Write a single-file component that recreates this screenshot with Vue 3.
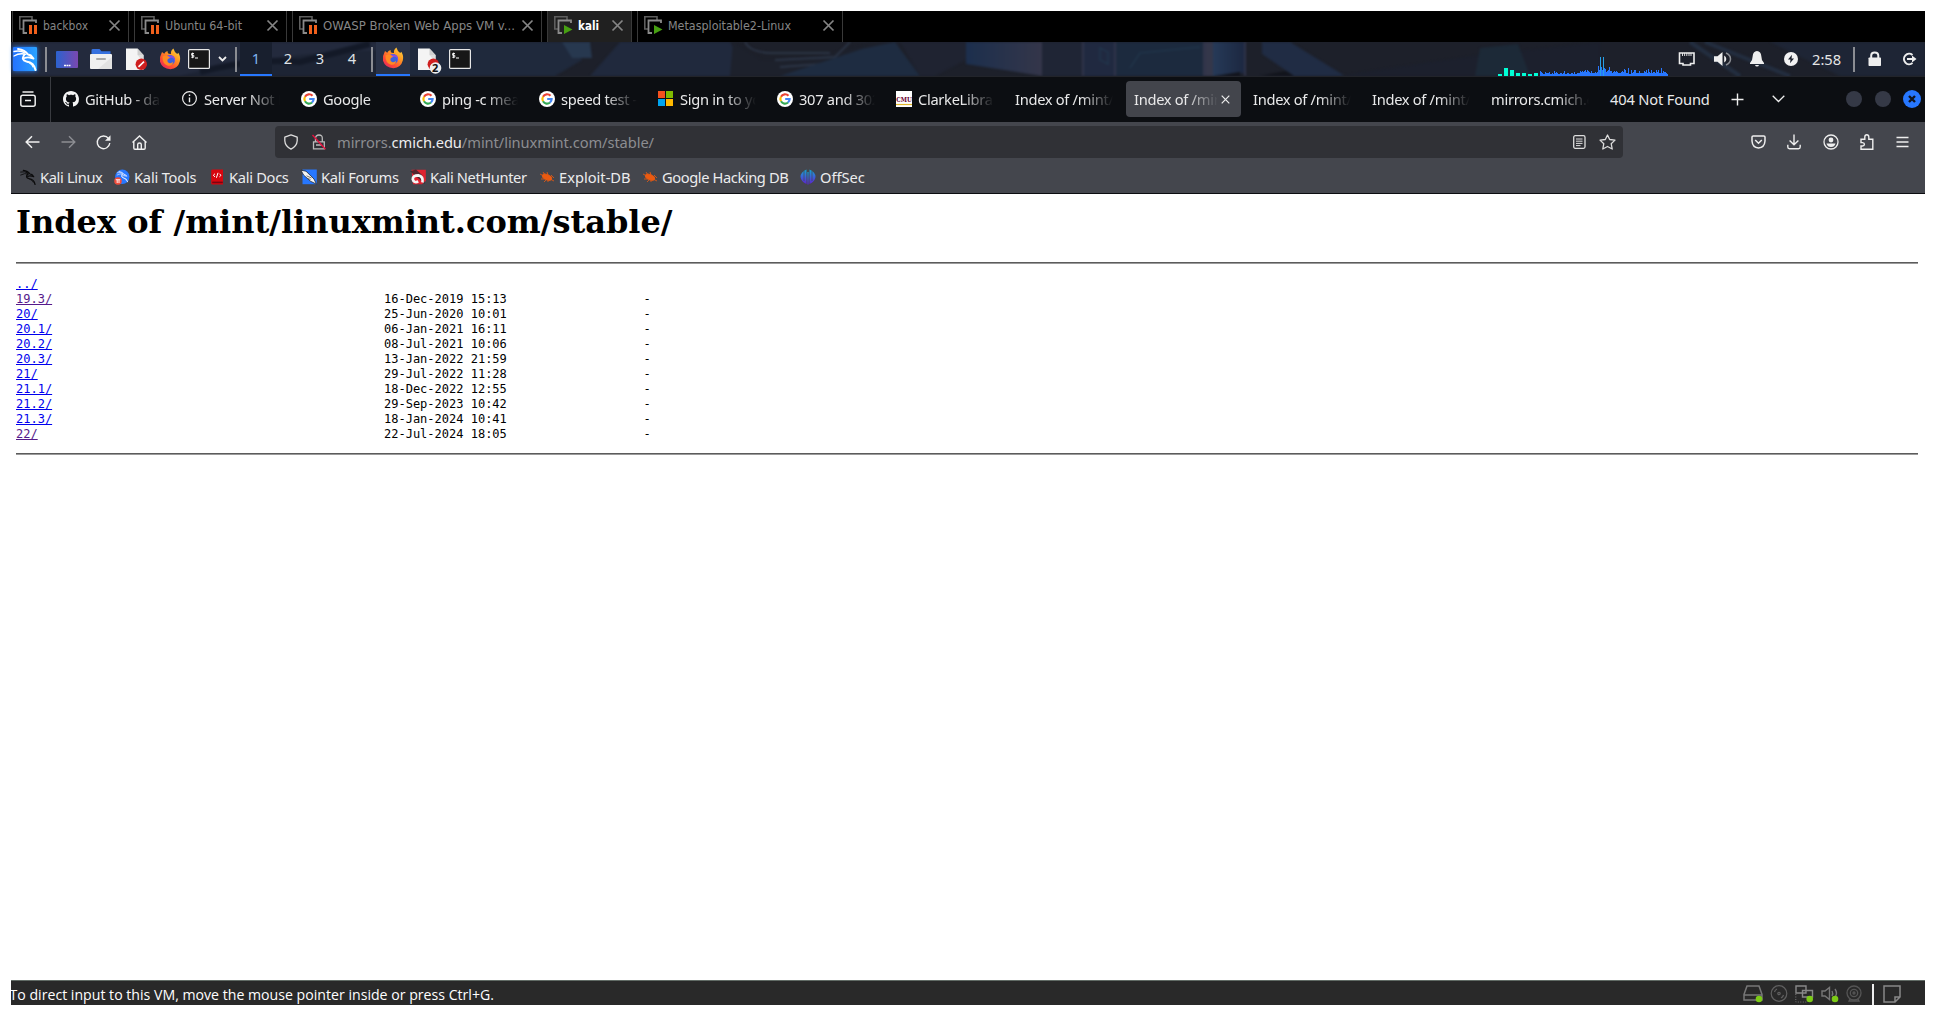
<script setup>
const vmTabs = [
  { name: 'backbox', state: 'paused', w: 117, t: 45 },
  { name: 'Ubuntu 64-bit', state: 'paused', w: 153, t: 77 },
  { name: 'OWASP Broken Web Apps VM v...', state: 'paused', w: 250, t: 192 },
  { name: 'kali', state: 'running', w: 85, t: 21, active: true },
  { name: 'Metasploitable2-Linux', state: 'running', w: 206, t: 123 },
]
const tabs = [
  { icon: 'github', text: 'GitHub - da' },
  { icon: 'info', text: 'Server Not F' },
  { icon: 'google', text: 'Google' },
  { icon: 'google', text: 'ping -c mea' },
  { icon: 'google', text: 'speed test -' },
  { icon: 'ms', text: 'Sign in to yo' },
  { icon: 'google', text: '307 and 302' },
  { icon: 'cmu', text: 'ClarkeLibrar' },
  { text: 'Index of /mint/l' },
  { text: 'Index of /min', active: true },
  { text: 'Index of /mint/l' },
  { text: 'Index of /mint/l' },
  { text: 'mirrors.cmich.e' },
  { text: '404 Not Found', full: true },
]
const bookmarks = [
  { icon: 'dragon', text: 'Kali Linux', w: 94, ls: -0.35 },
  { icon: 'tools', text: 'Kali Tools', w: 95, ls: -0.2 },
  { icon: 'docs', text: 'Kali Docs', w: 92, ls: -0.3 },
  { icon: 'forums', text: 'Kali Forums', w: 109, ls: -0.3 },
  { icon: 'hunter', text: 'Kali NetHunter', w: 129, ls: -0.38 },
  { icon: 'bug', text: 'Exploit-DB', w: 103, ls: 0 },
  { icon: 'bug', text: 'Google Hacking DB', w: 158, ls: -0.4 },
  { icon: 'offsec', text: 'OffSec', w: 70, ls: 0 },
]
const files = [
  ['19.3/', '16-Dec-2019 15:13', true],
  ['20/', '25-Jun-2020 10:01'],
  ['20.1/', '06-Jan-2021 16:11'],
  ['20.2/', '08-Jul-2021 10:06'],
  ['20.3/', '13-Jan-2022 21:59'],
  ['21/', '29-Jul-2022 11:28'],
  ['21.1/', '18-Dec-2022 12:55'],
  ['21.2/', '29-Sep-2023 10:42'],
  ['21.3/', '18-Jan-2024 10:41'],
  ['22/', '22-Jul-2024 18:05', true],
]
const netBars = [2, 8, 6, 3, 3, 2, 3]
const cpu = '5432243334223253432233235223322332422333545456465435333434a6j96j87456955345454333454763382263466333533335463743634436463383544322346533324332243322432234'
  .split('').slice(0, 128).map(c => parseInt(c, 36))
</script>

<template>
  <svg class="defs" width="0" height="0" aria-hidden="true">
    <defs>
      <linearGradient id="gDesk" x1="0" x2="1"><stop offset="0" stop-color="#2b62cf" /><stop offset="1" stop-color="#7a48b0" /></linearGradient>
      <linearGradient id="gKali" x1="0" x2="1"><stop offset="0" stop-color="#2473ff" /><stop offset="1" stop-color="#2aa2ff" /></linearGradient>
      <linearGradient id="gFox" x1="1" y1="0" x2=".2" y2="1"><stop offset="0" stop-color="#ffe14a" /><stop offset=".4" stop-color="#ff9a22" /><stop offset=".75" stop-color="#ff4b34" /><stop offset="1" stop-color="#e32860" /></linearGradient>
      <linearGradient id="gOff" x1="0" y1="0" x2="0" y2="1"><stop offset="0" stop-color="#12a7cf" /><stop offset=".5" stop-color="#3b63d8" /><stop offset="1" stop-color="#5a24cc" /></linearGradient>
      <linearGradient id="gA" x1="0" x2="1"><stop offset="0" stop-color="#1c2f4d" /><stop offset="1" stop-color="#34364a" /></linearGradient>
      <linearGradient id="gB" x1="0" x2="1"><stop offset="0" stop-color="#263a58" /><stop offset="1" stop-color="#1c2740" /></linearGradient>
      <filter id="soft" x="-2%" y="-20%" width="104%" height="140%" color-interpolation-filters="sRGB"><feGaussianBlur stdDeviation="1.2" /></filter>
    </defs>
    <symbol id="dragonShape" viewBox="0 0 24 24">
      <g fill="none" stroke="currentColor" stroke-linecap="round" stroke-linejoin="round">
        <path d="M1 4.5Q7 3 12 6" stroke-width="1.4" /><path d="M1 9Q7 5.5 13 7.5" stroke-width="1.3" />
        <path d="M5 2Q12 3 15 7.5L18 8.5L20.5 11.5L17 10.5Q13.5 10 11.5 11" stroke-width="1.9" />
        <path d="M11.5 7.5Q7.5 13 13.5 14.5Q21 15.5 22.5 23" stroke-width="2" />
        <path d="M14 14.8Q19 17 20 20" stroke-width="1.1" />
      </g>
    </symbol>
    <symbol id="foxShape" viewBox="0 0 22 22">
      <path d="M3 4L5.2 5.8Q6.2 3.8 8.5 3Q8.3 4.7 9.6 5.8L12 6Q11.4 2.8 14.4.5Q15.2 3.8 18.2 6L19.3 4.8Q22 9 20.8 13.5Q19 20.5 11.4 21.3Q3.2 20.8 1 13.8Q.2 9 3 4Z" fill="url(#gFox)" />
      <circle cx="11" cy="12" r="5" fill="#3b62dd" /><path d="M7 9Q10 6.3 14.7 8.5Q17 11.8 15.3 15Q16.2 9.8 12 9.7Q9.5 11.5 7 9Z" fill="#8a4ce0" />
      <path d="M3.5 8.5Q7 6 10.8 9.2Q11.4 10 8.9 10.9Q7.5 13.5 10 15Q12.3 15.8 14.2 13.8Q13.4 18.2 9 17.7Q3.2 16 3.5 8.5Z" fill="#ff8a22" />
    </symbol>
    <symbol id="docShape" viewBox="0 0 22 22">
      <path d="M0 .5H11.5L17.5 7V22H0Z" fill="#f4f4f4" /><path d="M11.5.5L17.5 7H11.5Z" fill="#cfcfcf" /><path d="M11.5 7H17.5V14Z" fill="#dedede" />
      <circle cx="15.3" cy="16.2" r="5.7" fill="#cf1f1f" />
    </symbol>
    <symbol id="termShape" viewBox="0 0 22 20"><rect x=".6" y=".6" width="20.8" height="18.8" rx="1" fill="#171717" stroke="#e7e7e7" stroke-width="1.2" /><path d="M6 4.5H3.6V6.3H5.8V8.2H3.2M4.6 3.6V9.2" fill="none" stroke="#fff" stroke-width=".9" /><path d="M7 9H10" stroke="#fff" stroke-width="1" /></symbol>
    <symbol id="googleShape" viewBox="0 0 16 16">
      <circle cx="8" cy="8" r="8" fill="#fff" />
      <g fill="none" stroke-width="2.2"><path d="M11.5 4.8A4.6 4.6 0 0 0 4 5.7" stroke="#ea4335" /><path d="M4 5.7A4.6 4.6 0 0 0 4 10.3" stroke="#fbbc05" /><path d="M4 10.3A4.6 4.6 0 0 0 11 11.5" stroke="#34a853" /><path d="M11 11.5Q12.6 10 12.6 8H8.2" stroke="#4285f4" /></g>
    </symbol>
  </svg>

  <main class="screen">
    <header class="vm-bar">
      <div v-for="t in vmTabs" :key="t.name" class="vm-tab" :class="{ active: t.active }" :style="{ width: t.w + 'px' }">
        <svg class="vm-ico" width="18" height="18" viewBox="0 0 18 18">
          <path d="M4 13H.8V.8H13V4" fill="none" stroke="#5f5f5f" stroke-width="1.6" /><path d="M8 17H4.5V4.5H17V7" fill="none" stroke="#8a8a8a" stroke-width="1.8" />
          <path v-if="t.state === 'paused'" d="M10 9H13V18H10ZM15 9H18V18H15Z" fill="#f0601c" />
          <path v-else d="M10 9L18.5 13.5L10 18Z" fill="#47a012" />
        </svg>
        <svg class="vm-name" height="20" :width="t.t"><text x="0" y="14.5" :textLength="t.t" lengthAdjust="spacingAndGlyphs">{{ t.name }}</text></svg>
        <svg class="vm-x" width="11" height="11" viewBox="0 0 11 11"><path d="M.5.5L10.5 10.5M10.5.5L.5 10.5" stroke="#858585" stroke-width="1.7" /></svg>
      </div>
    </header>

    <section class="panel">
      <svg class="wall" width="1914" height="34" viewBox="11 42 1914 34">
        <g filter="url(#soft)">
          <path d="M11 42H480V76H11Z" fill="#232a3d" /><path d="M180 76Q270 52 390 50L480 42V76Z" fill="#1d2434" /><path d="M200 72Q250 58 300 62L370 44" stroke="#131927" stroke-width="6" fill="none" />
          <path d="M400 42H570L582 60L555 76H400Z" fill="#1f293c" /><path d="M562 42L572 58H592L590 42Z" fill="#27384f" />
          <path d="M590 76L620 42H730L750 76Z" fill="#20293d" /><path d="M733 42L762 60H800L880 42H900V76H730Z" fill="#1d212c" />
          <path d="M745 42Q750 52 770 53H830M775 60L835 57L850 42M780 67L850 62" fill="none" stroke="#303b4e" stroke-width="1.4" />
          <path d="M780 76L862 49L895 42L920 76Z" fill="#1e2c41" /><path d="M900 42H966V60L935 76H920Z" fill="#1f2331" /><path d="M966 42H1042V76L966 64Z" fill="url(#gA)" />
          <path d="M1042 42H1083V76H1042Z" fill="#1f2535" /><path d="M1083 42H1115V76H1083Z" fill="#202940" /><path d="M1115 42H1203V76H1115Z" fill="#1c2a3e" />
          <path d="M1130 68L1140 53L1200 47M1100 48V60L1108 64V52Z" fill="none" stroke="#22394f" stroke-width="1.2" /><path d="M1203 42H1213V76H1203Z" fill="#34374a" /><path d="M1213 42H1245V73L1213 76Z" fill="url(#gB)" />
          <path d="M1083 42V76M1115 42V76M1205 42V76M1245 42V76" stroke="#30344a" stroke-width="2" /><path d="M1215 76L1240 72V76ZM1260 76L1285 71L1300 76Z" fill="#12141c" />
          <path d="M1262 42H1290L1345 76H1294L1262 54Z" fill="#202c44" /><path d="M1340 76Q1400 66 1480 55L1600 42V76Z" fill="#1c202d" />
          <path d="M1475 76L1480 48L1518 44L1530 76Z" fill="#1c2937" /><path d="M1690 42L1740 76M1705 42L1790 76" stroke="#232e40" stroke-width="4" /><path d="M1770 42H1925V76H1840Z" fill="#1e2535" />
        </g>
      </svg>
      <svg class="kali" width="24" height="24" viewBox="0 0 24 24"><rect width="24" height="24" rx="1" fill="url(#gKali)" /><use href="#dragonShape" width="24" height="24" color="#fff" /></svg>
      <i class="sep s1"></i>
      <svg class="p-desk" width="22" height="17" viewBox="0 0 22 17"><rect width="22" height="17" rx="1" fill="url(#gDesk)" /><path d="M8 14.5H10M10.5 14.5H12.5M13 14.5H14.5" stroke="#fff" stroke-width="1.6" /></svg>
      <svg class="p-folder" width="22" height="20" viewBox="0 0 22 20"><path d="M1.5 8V1.2Q1.5 0 3 0H9.5L11.5 2.3H20.5V8Z" fill="#3671df" /><rect y="5" width="22" height="15" rx="1" fill="#f0f0f0" /><path d="M22 8V20H8Z" fill="#e2e2e2" /><rect x="6" y="9" width="10" height="2" rx="1" fill="#aaa" /></svg>
      <svg class="p-doc" width="22" height="22" viewBox="0 0 22 22"><use href="#docShape" width="22" height="22" /><path d="M12.5 18.8L18 13.7" stroke="#fff" stroke-width="1.6" /></svg>
      <svg class="p-fox" width="22" height="22"><use href="#foxShape" width="22" height="22" /></svg>
      <svg class="p-term" width="22" height="20"><use href="#termShape" width="22" height="20" /></svg>
      <svg class="p-chev" width="9" height="6" viewBox="0 0 9 6"><path d="M1 1L4.5 4.4L8 1" fill="none" stroke="#eee" stroke-width="1.8" /></svg>
      <i class="sep s2"></i>
      <nav class="spaces"><span class="on">1</span><span>2</span><span>3</span><span>4</span></nav>
      <i class="sep s3"></i>
      <div class="task on"><svg width="22" height="22"><use href="#foxShape" width="22" height="22" /></svg></div>
      <div class="task doc"><svg width="24" height="26" viewBox="0 0 24 26"><use href="#docShape" width="22" height="22" /><circle cx="17.5" cy="20" r="5.8" fill="#eee" /><text x="14" y="24.3" class="badge">2</text></svg></div>
      <div class="task term"><svg width="22" height="20"><use href="#termShape" width="22" height="20" /></svg></div>

      <svg class="graph" width="172" height="24" viewBox="0 0 172 24" shape-rendering="crispEdges">
        <rect v-for="(h, i) in netBars" :key="'n' + i" :x="i * 6" :y="24 - h" width="4" :height="h" fill="#00ffd5" />
        <rect v-for="(h, i) in cpu" :key="'c' + i" :x="42 + i" :y="24 - h" width="1" :height="h" :fill="h > 12 ? '#27a0e8' : '#2877ff'" />
      </svg>
      <div class="tray">
        <svg width="18" height="16" viewBox="0 0 18 16"><path d="M1.5 2H16V12.5H12.5V14H5V12.5H1.5Z" fill="none" stroke="#eee" stroke-width="1.6" /><path d="M4.5 2V5M6.6 2V5M8.8 2V5M11 2V5M13 2V5" stroke="#eee" stroke-width=".9" /></svg>
        <svg width="18" height="16" viewBox="0 0 18 16"><path d="M0 5.3H3.5L8.5 1V15L3.5 10.7H0Z" fill="#eee" /><path d="M10.2 4.5Q12.3 5.5 12.3 8T10.2 11.5Z" fill="#eee" /><path d="M12 2Q16.5 4 16.5 8T12 14" fill="none" stroke="#8a8c92" stroke-width="1.5" /></svg>
        <svg width="14" height="16" viewBox="0 0 14 16"><path d="M7 0Q11 .7 11.3 5Q11.3 9.5 14 12V13H0V12Q2.7 9.5 2.7 5Q3 .7 7 0ZM5 14H9Q8.5 15.5 7 15.5T5 14" fill="#eee" /></svg>
        <svg width="14" height="14" viewBox="0 0 14 14"><circle cx="7" cy="7" r="7" fill="#f2f2f2" /><path d="M8 2.8L4 7.5H6.5L6 11.2L10 6.5H7.5Z" fill="#1b202c" /></svg>
        <time>2:58</time><i class="sep"></i>
        <svg width="14" height="16" viewBox="0 0 14 16"><rect x=".5" y="6.5" width="12.5" height="8.5" rx=".7" fill="#eee" /><path d="M3.2 7V4.5Q3.2 1.5 6.7 1.5T10.3 4.5V7" fill="none" stroke="#eee" stroke-width="2" /></svg>
        <svg width="15" height="14" viewBox="0 0 15 14"><path d="M10.5 3A5.2 5.2 0 1 0 10.5 11" fill="none" stroke="#eee" stroke-width="2" /><path d="M5 6H10V3.5L14.5 7L10 10.5V8H5Z" fill="#eee" /></svg>
      </div>
    </section>

    <section class="tabbar">
      <div class="view"><svg width="16" height="16" viewBox="0 0 16 16"><rect x=".8" y="4.3" width="14.4" height="11" rx="2" fill="none" stroke="#eee" stroke-width="1.5" /><path d="M2.5.9H13.5M5 9.6H11" stroke="#eee" stroke-width="1.5" /></svg></div>
      <div v-for="(t, i) in tabs" :key="i" class="tab" :class="{ active: t.active }">
        <svg v-if="t.icon" class="fav" width="16" height="16" viewBox="0 0 16 16">
          <path v-if="t.icon === 'github'" fill="#f4f4f4" d="M8 0C3.58 0 0 3.58 0 8c0 3.54 2.29 6.53 5.47 7.59.4.07.55-.17.55-.38 0-.19-.01-.82-.01-1.49-2.01.37-2.53-.49-2.69-.94-.09-.23-.48-.94-.82-1.13-.28-.15-.68-.52-.01-.53.63-.01 1.08.58 1.23.82.72 1.21 1.87.87 2.33.66.07-.52.28-.87.51-1.07-1.78-.2-3.64-.89-3.64-3.95 0-.87.31-1.59.82-2.15-.08-.2-.36-1.02.08-2.12 0 0 .67-.21 2.2.82.64-.18 1.32-.27 2-.27s1.36.09 2 .27c1.53-1.04 2.2-.82 2.2-.82.44 1.1.16 1.92.08 2.12.51.56.82 1.27.82 2.15 0 3.07-1.87 3.75-3.65 3.95.29.25.54.73.54 1.48 0 1.07-.01 1.93-.01 2.2 0 .21.15.46.55.38A8.01 8.01 0 0 0 16 8c0-4.42-3.58-8-8-8z" />
          <g v-else-if="t.icon === 'info'" fill="none" stroke="#eee" stroke-width="1.2"><circle cx="7.5" cy="7.5" r="6.9" /><path d="M7.5 6.4V11.3M7.5 3.6V5" stroke-width="1.4" /></g>
          <use v-else-if="t.icon === 'google'" href="#googleShape" width="16" height="16" />
          <g v-else-if="t.icon === 'ms'"><path d="M0 0H7V7H0Z" fill="#f4511e" /><path d="M8 0H15V7H8Z" fill="#7fba00" /><path d="M0 8H7V15H0Z" fill="#00a4ef" /><path d="M8 8H15V15H8Z" fill="#ffb900" /></g>
          <g v-else><path d="M0 0H16V16H0Z" fill="#fff" /><text x=".2" y="10.6" class="cmu" textLength="15.6" lengthAdjust="spacingAndGlyphs">CMU</text><path d="M0 13.5H16" stroke="#e2b72a" stroke-width="1.2" /></g>
        </svg>
        <span class="label" :class="{ full: t.full }">{{ t.text }}</span>
        <svg v-if="t.active" class="tab-x" width="9" height="9" viewBox="0 0 9 9"><path d="M.7.7L8.3 8.3M8.3.7L.7 8.3" stroke="#eee" stroke-width="1.2" /></svg>
      </div>
      <svg class="plus" width="13" height="13" viewBox="0 0 13 13"><path d="M6.5.5V12.5M.5 6.5H12.5" stroke="#eee" stroke-width="1.4" /></svg>
      <svg class="more" width="13" height="8" viewBox="0 0 13 8"><path d="M.7.8L6.5 6.5L12.3.8" fill="none" stroke="#eee" stroke-width="1.3" /></svg>
      <div class="wins"><i></i><i></i><svg width="18" height="18" viewBox="0 0 18 18"><circle cx="9" cy="9" r="9" fill="#2777ff" /><path d="M6 6L12 12M12 6L6 12" stroke="#11151f" stroke-width="2.4" /></svg></div>
    </section>

    <section class="nav">
      <div class="left">
        <svg width="15" height="14" viewBox="0 0 15 14"><path d="M14.5 7H1.5M7 1.2L1.2 7L7 12.8" fill="none" stroke="#f0f0f0" stroke-width="1.5" /></svg>
        <svg width="15" height="14" viewBox="0 0 15 14"><path d="M.5 7H13.5M8 1.2L13.8 7L8 12.8" fill="none" stroke="#8d8e93" stroke-width="1.4" /></svg>
        <svg width="15" height="15" viewBox="0 0 15 15"><path d="M12.6 3.6A6.3 6.3 0 1 0 13.8 8" fill="none" stroke="#f0f0f0" stroke-width="1.4" /><path d="M14.5.3V5.8H9Z" fill="#f0f0f0" /></svg>
        <svg width="15" height="15" viewBox="0 0 15 15"><path d="M.5 7.5L7.5.9L14.5 7.5M1.8 6.5V13Q1.8 14.2 3 14.2H12Q13.2 14.2 13.2 13V6.5M5.7 14V9.5Q5.7 8 7.5 8T9.3 9.5V14" fill="none" stroke="#f0f0f0" stroke-width="1.4" /></svg>
      </div>
      <div class="url">
        <svg width="14" height="16" viewBox="0 0 14 16"><path d="M7 .9L13.2 3.2V6.8Q12.8 12.5 7 15.1Q1.2 12.5.8 6.8V3.2Z" fill="none" stroke="#ddd" stroke-width="1.3" stroke-linejoin="round" /></svg>
        <svg class="lock" width="14" height="16" viewBox="0 0 14 16"><path d="M1.5 7.8H12.3V14.8H1.5ZM3.5 7.5V4.5Q3.5 1 7 1T10.3 4.5V7.5M4 11H10" fill="none" stroke="#bbb" stroke-width="1.3" /><path d="M.5 1L13.5 15.3" stroke="#e4103d" stroke-width="1.4" /></svg>
        <p>mirrors.<b>cmich.edu</b>/mint/linuxmint.com/stable/</p>
        <svg class="reader" width="13" height="14" viewBox="0 0 13 14"><rect x=".7" y=".7" width="11.3" height="12.6" rx="1.5" fill="none" stroke="#ddd" stroke-width="1.3" /><path d="M3 4H9.5M3 6.2H9.5M3 8.4H9.5M3 10.6H7.5" stroke="#ddd" /></svg>
        <svg class="star" width="17" height="16" viewBox="0 0 17 16"><path d="M8.5 1L10.7 5.5L16 6.1L12.2 9.7L13.2 15L8.5 12.5L3.8 15L4.8 9.7L1 6.1L6.3 5.5Z" fill="none" stroke="#ddd" stroke-width="1.3" stroke-linejoin="round" /></svg>
      </div>
      <div class="right">
        <svg width="15" height="14" viewBox="0 0 15 14"><path d="M1 2Q1 .9 2.2.9H12.8Q14 .9 14 2V6Q13.5 12.7 7.5 13Q1.5 12.7 1 6ZM4.2 5L7.5 8.2L10.8 5" fill="none" stroke="#eee" stroke-width="1.5" /></svg>
        <svg width="14" height="16" viewBox="0 0 14 16"><path d="M7 .5V10.5M2.6 6.4L7 10.7L11.4 6.4M.8 10.8V13Q.8 14.7 2.5 14.7H11.5Q13.2 14.7 13.2 13V10.8" fill="none" stroke="#eee" stroke-width="1.4" /></svg>
        <svg width="16" height="16" viewBox="0 0 16 16"><circle cx="8" cy="8" r="7" fill="none" stroke="#eee" stroke-width="1.3" /><circle cx="8" cy="6" r="2.4" fill="#eee" /><path d="M3.5 9.5H12.5Q11.5 13 8 13T3.5 9.5Z" fill="#eee" /></svg>
        <svg width="14" height="16" viewBox="0 0 14 16"><path d="M1 5.2H4.8V3Q4.9.8 6.8.8T8.8 3V5.2H12.8V15.2H1V12H2.5Q4.4 11.8 4.4 10.3T2.5 8.6H1Z" fill="none" stroke="#eee" stroke-width="1.4" /></svg>
        <svg width="13" height="12" viewBox="0 0 13 12"><path d="M.5 1.5H12.5M.5 6H12.5M.5 10.5H12.5" stroke="#eee" stroke-width="1.3" /></svg>
      </div>
    </section>

    <section class="marks">
      <div v-for="b in bookmarks" :key="b.text" class="mark" :style="{ width: b.w + 'px' }">
        <svg width="16" height="16" viewBox="0 0 16 16">
          <use v-if="b.icon === 'dragon'" href="#dragonShape" width="16" height="16" color="#0b0b0c" />
          <g v-else-if="b.icon === 'tools'"><circle cx="8.3" cy="7.8" r="7.2" fill="#2777ff" /><use href="#dragonShape" x="2.5" y="1.5" width="12" height="12" color="#dfe9ff" /><circle cx="4" cy="12" r="3.8" fill="#ef4c3c" /><path d="M1.8 10.7H6.2M3.2 11V14M5 11V14" stroke="#fff" stroke-width=".9" /></g>
          <g v-else-if="b.icon === 'docs'"><path d="M2.2 1.8Q2.2.5 3.6.5H14V15.5H3.5Q2.2 15.5 2.2 14Z" fill="#d8060f" /><path d="M3.2 12.6H13.8V14.2H3.2Z" fill="#7a0410" /><path d="M6 4.7L4.3 6.3L6 7.9M10.4 4.7L12 6.3L10.4 7.9M9 3.8L7.4 8.8" fill="none" stroke="#fff" /></g>
          <g v-else-if="b.icon === 'forums'"><path d="M1.5.5H15.8V15.2H1.5Z" fill="#2777ff" /><path d="M0 1.2L5 2.2L13 10L15.5 15.2L9.5 12.2L2.5 6Z" fill="#f5f5f5" stroke="#20242c" stroke-width=".8" /><path d="M5.5 6.8L10.5 9M6 9.2L9.5 10.5" fill="none" stroke="#555" stroke-width=".8" /></g>
          <g v-else-if="b.icon === 'hunter'"><path d="M1.5.8H15.8V12L12 15.2H3Z" fill="#df2230" /><path d="M0 2.2L6 .5L12 6L15 15L8 9Z" fill="#24262c" opacity=".75" /><path d="M12.5 13.5Q13.5 7.2 8.3 6.3Q2.6 6.3 2.8 10.3Q3.8 14.3 8.3 12.6" fill="none" stroke="#f5f5f5" stroke-width="2.7" /></g>
          <g v-else-if="b.icon === 'bug'" fill="#ec5a10" stroke="#ec5a10" stroke-width=".8"><ellipse cx="8" cy="8.2" rx="5" ry="2.6" transform="rotate(22 8 8.2)" /><path d="M1 5L5 7M4 3L6 6M8 3L9 6M12 6L15 9M2 10H6M5 13L8 10M9 13V10M11 10L15 12" fill="none" /></g>
          <g v-else fill="url(#gOff)"><path d="M6.5.5V15Q1 12.5.5 8Q.5 3 6.5.5ZM9.5.5V15Q15 12.5 15.5 8Q15.5 3 9.5.5Z" /><path d="M7.4 3H8.6V15.5H7.4Z" /><path d="M4 2V12M12 2V12" stroke="#44464d" stroke-width=".7" /></g>
        </svg>
        <span :style="{ letterSpacing: b.ls + 'px' }">{{ b.text }}</span>
      </div>
    </section>

    <article class="page">
      <h1>Index of /mint/linuxmint.com/stable/</h1>
      <hr>
      <div class="listing">
        <div class="row"><a>../</a></div>
        <div v-for="f in files" :key="f[0]" class="row"><div class="name"><a :class="{ seen: f[2] }">{{ f[0] }}</a></div><span class="date">{{ f[1] }}</span><span>-</span></div>
      </div>
      <hr>
    </article>

    <footer class="status">
      <svg class="msg" width="500" height="24"><text x="-1.5" y="19" textLength="484.5" lengthAdjust="spacingAndGlyphs">To direct input to this VM, move the mouse pointer inside or press Ctrl+G.</text></svg>
      <div class="devs">
        <svg width="20" height="18" viewBox="0 0 20 18"><path d="M4 1H16L19 9.5V15H1V9.5ZM1 10H19" fill="none" stroke="#777" stroke-width="1.5" /><circle cx="16" cy="14" r="3.3" fill="#7ccb16" /></svg>
        <svg width="18" height="18" viewBox="0 0 18 18"><g fill="none" stroke="#606060" stroke-width="1.2"><circle cx="9" cy="8.5" r="7.8" /><circle cx="9" cy="8.5" r="1.2" /><path d="M4.5 7Q5 5 7 4M13.5 10Q13 12 11 13" /></g></svg>
        <svg width="19" height="18" viewBox="0 0 19 18"><path d="M1 1H11V8H1ZM7.5 5.5H17.5V12H7.5Z" fill="#292929" stroke="#888" stroke-width="1.4" /><path d="M.8 9V17H12" fill="none" stroke="#777" stroke-dasharray="1 1.5" /><circle cx="14.7" cy="14" r="3.3" fill="#7ccb16" /></svg>
        <svg width="18" height="18" viewBox="0 0 18 18"><path d="M1 6H4L8.5 2.5V14.5L4 11H1ZM11 6Q12.5 8.5 11 11M14 4Q17 8.5 14 12" fill="none" stroke="#777" stroke-width="1.4" /><circle cx="14" cy="14" r="3.3" fill="#7ccb16" /></svg>
        <svg width="16" height="18" viewBox="0 0 16 18"><g fill="none" stroke="#555" stroke-width="1.3"><circle cx="8" cy="8" r="7" /><circle cx="8" cy="8" r="3.7" /><circle cx="8" cy="8" r="1" /><path d="M4 14L3 16H13L12 14" /></g></svg>
        <i></i>
        <svg width="18" height="18" viewBox="0 0 18 18"><path d="M1 1H17V12L12 17H1ZM17 12H12V17" fill="none" stroke="#888" stroke-width="1.5" /></svg>
      </div>
    </footer>
  </main>
</template>

<style>
html, body { margin: 0; background: #fff; }
</style>
<style scoped>
* { box-sizing: border-box; }
svg { display: block; flex: none; overflow: visible; }
.defs { position: absolute; }
.screen { width: 1936px; height: 1016px; padding: 11px; display: flex; flex-direction: column; overflow: hidden; font-family: "Noto Sans", sans-serif; font-size: 14.67px; }
.vm-bar { height: 31px; background: #000; display: flex; gap: 5px; padding-left: 1px; flex: none; }
.vm-tab { height: 31px; border-left: 1px solid #393939; border-right: 1px solid #393939; display: flex; align-items: center; padding: 0 8px 3px 6px; flex: none; }
.vm-tab.active { background: #202020; }
.vm-name { margin-left: 6px; font: 12px "DejaVu Sans", sans-serif; fill: #868686; }
.vm-tab.active .vm-name { fill: #fff; font-weight: 700; }
.vm-x { margin-left: auto; }
.panel { height: 34px; flex: none; background: #1d202a; display: flex; align-items: center; position: relative; padding-left: 2px; }
.panel > * { position: relative; flex: none; }
.panel > .wall { position: absolute; left: 0; top: 0; overflow: hidden; }
.kali { filter: drop-shadow(0 0 2px #2680ff); }
.sep { width: 2px; height: 25px; background: #8b8d93; }
.s1 { margin-left: 8px; }
.p-desk { margin-left: 9px; }
.p-folder { margin-left: 12px; }
.p-doc { margin-left: 14px; }
.p-fox { margin-left: 11px; }
.p-term { margin-left: 7px; }
.p-chev { margin-left: 8px; }
.s2 { margin-left: 8px; }
.spaces { display: flex; margin-left: 3px; }
.spaces span { width: 32px; height: 34px; line-height: 33px; text-align: center; color: #dfe2e6; }
.spaces .on { background: #181f2e; border-bottom: 2px solid #2777ff; color: #7fb5ee; }
.s3 { margin-left: 3px; }
.task { width: 34px; height: 34px; margin-left: 3px; display: flex; align-items: center; justify-content: center; }
.task + .task { margin-left: 0; }
.task.on { background: #293247; border-bottom: 2px solid #2777ff; }
.task.doc { padding: 3px 0 0 5px; }
.task.term { padding-right: 2px; }
.badge { font: bold 11px "Noto Sans", sans-serif; fill: #111; }
.cmu { font: bold 8px "DejaVu Serif", serif; fill: #6a0032; }
.graph { margin-left: 1020px; align-self: flex-end; }
.tray { display: flex; align-items: center; color: #e6e6e6; position: absolute !important; right: 8px; height: 34px; }
.tray svg { margin-right: 18px; }
.tray svg:nth-of-type(4) { margin-right: 14px; margin-left: 2px; }
.tray time { width: 41px; }
.tray .sep { margin-right: 13px; }
.tray svg:nth-of-type(5) { margin-right: 20px; }
.tray svg:nth-of-type(6) { margin-right: 0; }
.tabbar { height: 46px; flex: none; background: #0c0e12; border-top: 1px solid #22242a; display: flex; align-items: center; color: #e9e9ea; padding-bottom: 1px; }
.view { width: 40px; height: 45px; border-right: 1px solid #393b40; padding: 14px 0 0 9px; flex: none; margin-right: 2px; }
.tab { width: 115px; height: 36px; margin: 0 2px; padding: 0 9px 0 8px; border-radius: 4px; display: flex; align-items: center; flex: none; }
.fav { margin-right: 6px; }
.label { flex: 1; min-width: 0; overflow: hidden; white-space: nowrap; line-height: 24px; margin-top: -1px; letter-spacing: -.3px; mask-image: linear-gradient(to left, transparent, #000 32px); }
.label.full { overflow: visible; mask-image: none; letter-spacing: -.15px; }
.tab.active { background: #43454c; }
.active .label { flex: none; width: 84px; }
.tab-x { margin-left: 3px; }
.plus { margin-left: 12px; }
.more { margin-left: 28px; }
.wins { display: flex; gap: 13px; align-items: center; margin-left: 61px; }
.wins i { width: 16px; height: 16px; border-radius: 50%; background: #353946; }
.wins svg { margin-left: -1px; }
.nav { height: 40px; flex: none; background: #44464d; display: flex; align-items: center; }
.left { display: flex; gap: 20.7px; padding-left: 14px; width: 264px; flex: none; }
.url { width: 1348px; height: 32px; background: #303136; border-radius: 4px; display: flex; align-items: center; padding: 0 7px 0 9px; flex: none; }
.lock { margin-left: 14px; }
.url p { margin: 0 auto 0 11px; color: #8c8d91; letter-spacing: -.07px; }
.url b { font-weight: 400; color: #ededee; }
.star { margin-left: 13px; }
.right { display: flex; align-items: center; gap: 21.4px; margin-left: 128px; }
.marks { height: 32px; flex: none; background: #44464d; border-bottom: 1px solid #0b0c10; display: flex; align-items: center; padding: 0 0 1px 9px; color: #ececed; }
.mark { display: flex; align-items: center; flex: none; }
.mark span { margin-left: 4px; white-space: nowrap; }
.page { flex: 1; padding: 0 7px 0 5px; color: #000; }
h1 { margin: 8px 0 20px; font: bold 32px/40px "DejaVu Serif", serif; height: 40px; }
hr { margin: 0; border: 0; height: 2px; background: #5c5c5c; border-bottom: 1px solid #9a9a9a; }
.listing { margin: 13px 0 11px; font: 12px/15px "DejaVu Sans Mono", monospace; }
.row { display: flex; height: 15px; }
.name { width: 368px; }
.date { width: 259.5px; }
a { color: #0000ee; text-decoration: underline; }
a.seen { color: #551a8b; }
.status { height: 25px; flex: none; background: #292929; border-top: 1px solid #616b65; display: flex; justify-content: space-between; }
.msg { overflow: hidden; font: 15px "Open Sans", sans-serif; fill: #fff; }
.devs { display: flex; align-items: center; padding: 2px 24px 0 0; }
.devs svg + svg { margin-left: 7px; }
.devs i { width: 2px; height: 21px; background: #eee; margin: 0 9px 0 10px; }
</style>
